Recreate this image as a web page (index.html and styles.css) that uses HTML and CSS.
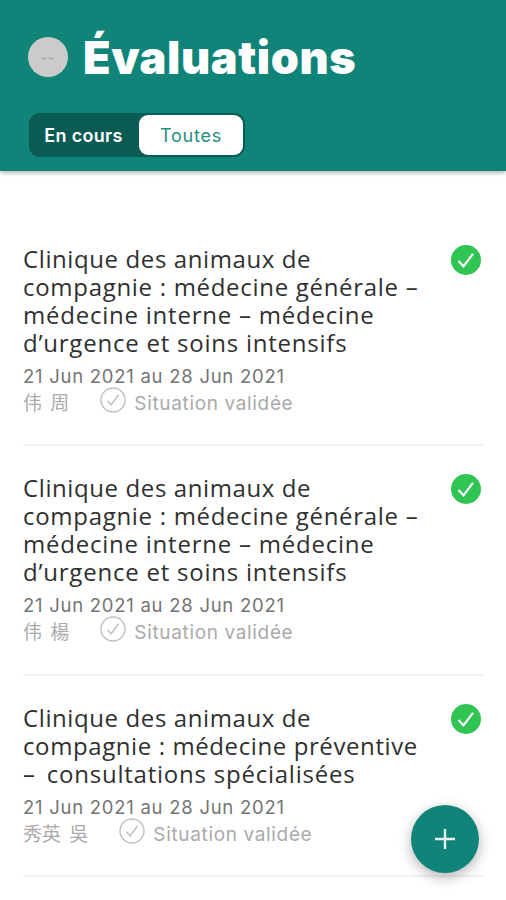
FILE: index.html
```html
<!DOCTYPE html>
<html lang="fr">
<head>
    <meta charset="UTF-8">
    <meta name="viewport" content="width=device-width, initial-scale=1.0">
    <title>Évaluations</title>
    <link rel="stylesheet" href="styles.css">
</head>
<body>
    <svg class="defs" width="0" height="0">
        <symbol id="check-outline" viewBox="0 0 26 26">
            <circle cx="13" cy="13" r="12" fill="none" stroke="currentColor" stroke-width="1.5"/>
            <path d="M7.5 13.8l3.6 4L18.6 7.8" fill="none" stroke="currentColor" stroke-width="1.5"/>
        </symbol>
        <symbol id="check-full" viewBox="0 0 30 30">
            <circle cx="15" cy="15" r="15" fill="#30c553"/>
            <path d="M7.5 16l5 5.3L22 8.8" fill="none" stroke="#fff" stroke-width="2.2"/>
        </symbol>
    </svg>

    <header class="header">
        <div class="header-title">
            <div class="avatar">--</div>
            <h1>Évaluations</h1>
        </div>
        <div class="segment">
            <button class="segment-button">En cours</button>
            <button class="segment-button active">Toutes</button>
        </div>
    </header>

    <main class="list">
        <article class="item">
            <div class="item-content">
                <h2>
                    <span class="line tight">Clinique des animaux de</span>
                    <span class="line">compagnie : médecine générale –</span>
                    <span class="line wide">médecine interne – médecine</span>
                    <span class="line wide">d’urgence et soins intensifs</span>
                </h2>
                <p class="dates">21 Jun 2021 au 28 Jun 2021</p>
                <div class="meta">
                    <span class="person">伟 周</span>
                    <svg class="meta-icon"><use href="#check-outline"/></svg>
                    <span class="status">Situation validée</span>
                </div>
            </div>
            <svg class="item-check"><use href="#check-full"/></svg>
        </article>

        <article class="item">
            <div class="item-content">
                <h2>
                    <span class="line tight">Clinique des animaux de</span>
                    <span class="line">compagnie : médecine générale –</span>
                    <span class="line wide">médecine interne – médecine</span>
                    <span class="line wide">d’urgence et soins intensifs</span>
                </h2>
                <p class="dates">21 Jun 2021 au 28 Jun 2021</p>
                <div class="meta">
                    <span class="person">伟 楊</span>
                    <svg class="meta-icon"><use href="#check-outline"/></svg>
                    <span class="status">Situation validée</span>
                </div>
            </div>
            <svg class="item-check"><use href="#check-full"/></svg>
        </article>

        <article class="item">
            <div class="item-content">
                <h2>
                    <span class="line tight">Clinique des animaux de</span>
                    <span class="line tight">compagnie : médecine préventive</span>
                    <span class="line wide"><span class="dash">–</span> consultations spécialisées</span>
                </h2>
                <p class="dates">21 Jun 2021 au 28 Jun 2021</p>
                <div class="meta">
                    <span class="person">秀英 吳</span>
                    <svg class="meta-icon"><use href="#check-outline"/></svg>
                    <span class="status">Situation validée</span>
                </div>
            </div>
            <svg class="item-check"><use href="#check-full"/></svg>
        </article>
    </main>

    <button class="fab" aria-label="Ajouter">
        <svg width="22" height="22" viewBox="0 0 22 22">
            <path d="M11 1v20M1 11h20" stroke="#e4f4f1" stroke-width="2.4" fill="none"/>
        </svg>
    </button>
</body>
</html>
```
FILE: styles.css
```css
* {
    box-sizing: border-box;
}
body {
    margin: 0;
    height: 900px;
    overflow: hidden;
    background-color: #fff;
    font-family: 'Open Sans', 'Noto Sans CJK SC', sans-serif;
}
h1, h2, p {
    margin: 0;
}
button {
    border: none;
    padding: 0;
    font-family: inherit;
}
.defs {
    display: block;
}
.header {
    height: 171px;
    padding: 30px 29px 0 28px;
    background-color: #108478;
    box-shadow: 0 1px 5px rgba(0, 0, 0, 0.4);
}
.header-title {
    display: flex;
    align-items: center;
    height: 54px;
}
.avatar {
    width: 40px;
    height: 40px;
    border-radius: 50%;
    background-color: #cbcbcb;
    color: #aaa;
    font-size: 20px;
    line-height: 40px;
    letter-spacing: 1px;
    text-align: center;
}
h1 {
    margin-left: 15px;
    padding-top: 2px;
    color: #fff;
    font-family: 'Inter', sans-serif;
    font-size: 45px;
    font-weight: 900;
    line-height: 54px;
    letter-spacing: 0.6px;
}
.segment {
    display: flex;
    width: 216px;
    height: 44px;
    margin: 29px 0 0 1px;
    padding: 2px;
    border-radius: 11px;
    background-color: #0a5b54;
}
.segment-button {
    width: 108px;
    padding: 1px 3px 0 0;
    border-radius: 9px;
    background: none;
    color: #fff;
    font-family: 'Inter', sans-serif;
    font-size: 18px;
    font-weight: 600;
    letter-spacing: 0.3px;
}
.segment-button.active {
    width: 104px;
    padding-right: 0;
    background-color: #fff;
    color: #278f80;
    font-weight: 400;
    letter-spacing: 0.8px;
}
.list {
    padding: 46px 22px 0 23px;
}
.item {
    display: flex;
    justify-content: space-between;
    align-items: flex-start;
    padding: 28px 3px 27.3px 0;
    border-bottom: 2px solid #f3f3f3;
}
.item-content {
    white-space: nowrap;
}
h2 {
    color: #303030;
    font-size: 24px;
    font-weight: 400;
    line-height: 28px;
    letter-spacing: 0.7px;
}
.line {
    display: block;
}
.tight {
    letter-spacing: 0.6px;
}
.wide {
    letter-spacing: 0.77px;
}
.dash {
    margin-right: 4px;
}
.dates {
    margin-top: 6px;
    color: #757575;
    font-family: 'Inter', sans-serif;
    font-size: 18.5px;
    line-height: 26px;
    letter-spacing: 0.74px;
}
.meta {
    display: flex;
    height: 27px;
    margin-top: 1px;
    color: #aaa;
    font-family: 'Inter', 'Noto Sans CJK SC', sans-serif;
    font-size: 19px;
    line-height: 27px;
}
.person {
    word-spacing: 3px;
}
.meta-icon {
    width: 26px;
    height: 26px;
    margin: -3px 8px 0 31px;
    color: #c2c2c2;
}
.status {
    letter-spacing: 0.65px;
}
.item-check {
    width: 30px;
    height: 30px;
    flex: none;
}
.fab {
    position: fixed;
    top: 805px;
    left: 411px;
    display: flex;
    justify-content: center;
    align-items: center;
    width: 68px;
    height: 68px;
    border-radius: 50%;
    background-color: #108478;
    box-shadow: 0 4px 13px rgba(0, 0, 0, 0.3);
}
```
